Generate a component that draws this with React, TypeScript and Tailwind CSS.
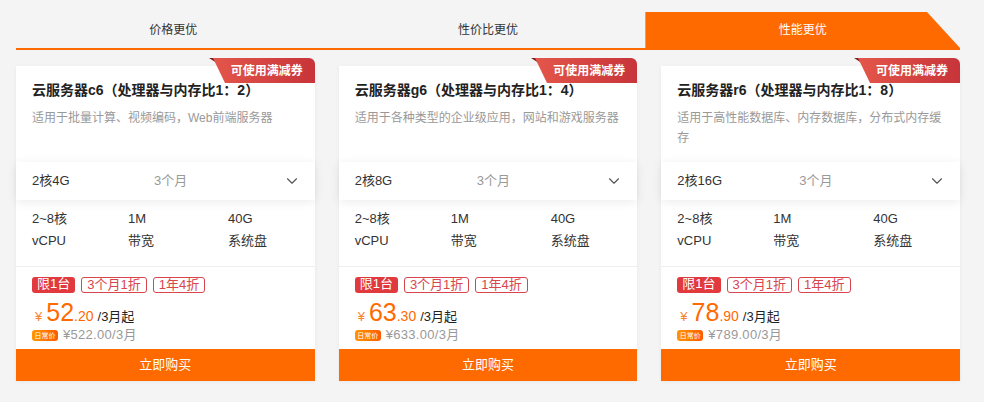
import { ChevronDown } from "lucide-react";

interface Plan {
  name: string;
  desc: string;
  spec: string;
  cpu: string;
  price: string;
  cents: string;
  original: string;
}

const plans: Plan[] = [
  {
    name: "云服务器c6（处理器与内存比1：2）",
    desc: "适用于批量计算、视频编码，Web前端服务器",
    spec: "2核4G",
    cpu: "2~8核",
    price: "52",
    cents: ".20",
    original: "¥522.00/3月",
  },
  {
    name: "云服务器g6（处理器与内存比1：4）",
    desc: "适用于各种类型的企业级应用，网站和游戏服务器",
    spec: "2核8G",
    cpu: "2~8核",
    price: "63",
    cents: ".30",
    original: "¥633.00/3月",
  },
  {
    name: "云服务器r6（处理器与内存比1：8）",
    desc: "适用于高性能数据库、内存数据库，分布式内存缓存",
    spec: "2核16G",
    cpu: "2~8核",
    price: "78",
    cents: ".90",
    original: "¥789.00/3月",
  },
];

const tabs = ["价格更优", "性价比更优", "性能更优"];

function CouponBadge() {
  return (
    <div className="absolute -top-2 right-0 h-[25px] w-[106px]">
      <svg width="106" height="25" viewBox="0 0 106 25" className="absolute inset-0">
        <defs>
          <linearGradient id="cb" x1="0" y1="0" x2="1" y2="0">
            <stop offset="0" stopColor="#e4564a" />
            <stop offset="1" stopColor="#c7343a" />
          </linearGradient>
        </defs>
        <path d="M0 0 L8 0 L14 9 Z" fill="#7a1f1f" />
        <path d="M4 0 H100 A6 6 0 0 1 106 6 V25 H16 Z" fill="url(#cb)" />
      </svg>
      <span className="relative flex h-full items-center justify-end pr-[12px] text-[12px] font-bold text-white">
        可使用满减券
      </span>
    </div>
  );
}

function PlanCard({ plan }: { plan: Plan }) {
  return (
    <div className="relative bg-white shadow-[0_1px_4px_rgba(0,0,0,0.05)]">
      <CouponBadge />
      <div className="px-4 pt-[14px]">
        <h3 className="text-[14px] font-bold leading-5 text-[#222]">{plan.name}</h3>
        <p className="mt-2 h-[54px] text-[12px] leading-5 text-[#999]">{plan.desc}</p>
      </div>

      <div className="flex h-[38px] items-center bg-white pl-4 pr-[14px] text-[13px] shadow-[0_2px_10px_rgba(0,0,0,0.08)]">
        <span className="w-[122px] text-[#333]">{plan.spec}</span>
        <span className="flex-1 text-[#999]">3个月</span>
        <ChevronDown size={18} strokeWidth={1.5} className="text-[#555]" />
      </div>

      <div className="grid grid-cols-[96px_100px_1fr] border-b border-[#eeeeee] px-4 pb-[14px] pt-2 text-[13px] leading-[22px] text-[#333]">
        <span>{plan.cpu}</span>
        <span>1M</span>
        <span>40G</span>
        <span>vCPU</span>
        <span>带宽</span>
        <span>系统盘</span>
      </div>

      <div className="px-4 pt-[10px]">
        <div className="flex gap-[6px] text-[13px] leading-[14px]">
          <span className="rounded-[3px] bg-[#e0393e] px-[5px] text-white">限1台</span>
          <span className="rounded-[3px] border border-[#d8454d] px-[5px] text-[#d8454d]">3个月1折</span>
          <span className="rounded-[3px] border border-[#d8454d] px-[5px] text-[#d8454d]">1年4折</span>
        </div>
        <div className="mt-[5px] flex h-[28px] items-baseline text-[#ff6a00]">
          <span className="ml-[3px] text-[13px] text-[#f7812f]">¥</span>
          <span className="ml-[4px] text-[25px] leading-[28px]">{plan.price}</span>
          <span className="text-[14px]">{plan.cents}</span>
          <span className="ml-[4px] text-[13px] text-[#222]">/3月起</span>
        </div>
        <div className="flex h-[18px] items-center">
          <span className="flex h-[11px] w-[26px] items-center justify-center rounded-[3px] bg-gradient-to-r from-[#ff9500] to-[#ff5a00] text-[7px] leading-none text-white">
            日常价
          </span>
          <span className="ml-[5px] text-[13px] tracking-[0.3px] text-[#999]">{plan.original}</span>
        </div>
      </div>

      <button className="mt-[5px] flex h-8 w-full items-center justify-center bg-[#ff6a00] text-[13px] text-white">
        立即购买
      </button>
    </div>
  );
}

export default function App() {
  return (
    <main className="min-h-screen bg-[#f4f4f4] pb-4 pt-3 font-['Liberation_Sans','Noto_Sans_CJK_SC',sans-serif]">
      <div className="ml-4 w-[944px]">
        <div className="flex border-b-2 border-[#ff6a00]">
          {tabs.map((t, i) => (
            <div
              key={t}
              className={`flex h-9 flex-1 items-center justify-center text-[12px] ${
                i === 2
                  ? "bg-[#ff6a00] text-white [clip-path:polygon(0_0,calc(100%-33px)_0,100%_100%,0_100%)]"
                  : "text-[#333]"
              }`}
            >
              {t}
            </div>
          ))}
        </div>

        <div className="mt-4 grid grid-cols-3 gap-6">
          {plans.map((p) => (
            <PlanCard key={p.name} plan={p} />
          ))}
        </div>
      </div>
    </main>
  );
}
